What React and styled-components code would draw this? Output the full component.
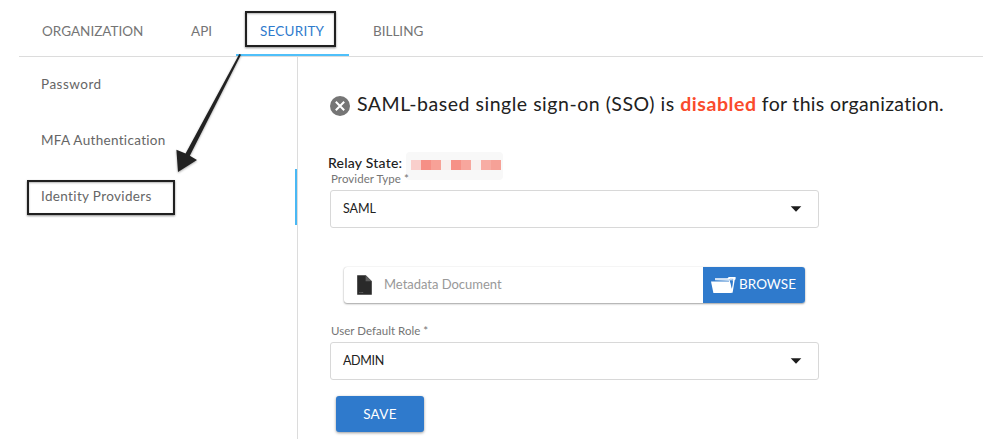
import React from "react";
import styled, { createGlobalStyle } from "styled-components";

const Global = createGlobalStyle`
  *, *::before, *::after { box-sizing: border-box; }
  body { margin: 0; background: #fff; font-family: Lato, "Open Sans", sans-serif; color: #212121; }
`;

const Page = styled.div`
  position: relative;
  width: 983px;
  height: 439px;
  padding-left: 19px;
  overflow: hidden;
  background: #fff;
`;

const TabBar = styled.nav`
  display: flex;
  height: 57px;
  padding-top: 8px;
  border-bottom: 1px solid #dcdcdc;
`;

const Tab = styled.a`
  width: ${(p) => p.$width}px;
  height: 48px;
  padding-left: ${(p) => p.$inset || 24}px;
  line-height: 46px;
  font-size: 13.5px;
  letter-spacing: ${(p) => p.$track || 0}px;
  white-space: nowrap;
  color: ${(p) => (p.$active ? "#2f7bcd" : "#757575")};
  border-bottom: 2px solid ${(p) => (p.$active ? "#4fc0fa" : "transparent")};
`;

const Body = styled.div`
  display: flex;
  height: 382px;
`;

const Sidebar = styled.aside`
  width: 279px;
  border-right: 1px solid #dcdcdc;
`;

const SideItem = styled.a`
  display: block;
  height: 56px;
  padding-left: 22px;
  line-height: 54px;
  font-size: 13.5px;
  letter-spacing: ${(p) => p.$track || 0}px;
  white-space: nowrap;
  color: #666;
  border-right: 2px solid ${(p) => (p.$active ? "#49b8f4" : "transparent")};
`;

const Content = styled.main`
  display: flex;
  flex-direction: column;
  align-items: flex-start;
  padding: 35px 0 0 30px;
`;

const Status = styled.h1`
  display: flex;
  align-items: center;
  gap: 7px;
  height: 28px;
  margin: 0 0 0 2px;
  font-size: 19.5px;
  font-weight: 400;
  letter-spacing: 0.52px;
  white-space: pre;
`;

const StatusText = styled.span`
  line-height: 24px;
  padding-bottom: 4px;
`;

const Disabled = styled.strong`
  font-weight: 700;
  letter-spacing: 0.55px;
  color: #fa4b2c;
`;

const StatusEnd = styled.span`
  letter-spacing: 0.32px;
`;

const RelayRow = styled.div`
  display: flex;
  height: 28px;
  margin-top: 32px;
`;

const RelayLabel = styled.span`
  width: 78px;
  line-height: 22px;
  font-size: 14px;
  font-weight: 500;
  letter-spacing: 0.22px;
  white-space: nowrap;
`;

const Redacted = styled.span`
  display: flex;
  width: 97px;
  height: 28px;
  padding: 8px 0 0 5px;
  border-radius: 4px;
  background: #f8f8f8;
`;

const Pixel = styled.i`
  width: 10px;
  height: 10px;
  background: ${(p) => p.$color};
`;

const FieldLabel = styled.label`
  position: relative;
  height: 14px;
  margin: ${(p) => p.$top}px 0 4px 3px;
  line-height: 14px;
  font-size: 11.5px;
  letter-spacing: ${(p) => p.$track}px;
  color: #757575;
`;

const Select = styled.div`
  display: flex;
  align-items: center;
  justify-content: space-between;
  width: 489px;
  height: 38px;
  margin-left: 2px;
  padding: 0 16px 1px 12px;
  border: 1px solid #d8d8d8;
  border-radius: 3px;
  font-size: 12.5px;
  letter-spacing: ${(p) => p.$track}px;
`;

const Upload = styled.div`
  display: flex;
  width: 461px;
  height: 36px;
  margin: 39px 0 0 16px;
  border-radius: 3px;
  box-shadow: 0 1px 2px rgba(0, 0, 0, 0.36), 0 0 1px rgba(0, 0, 0, 0.2);
`;

const FileName = styled.div`
  display: flex;
  align-items: center;
  gap: 12px;
  width: 359px;
  padding-left: 13px;
  font-size: 13px;
  letter-spacing: -0.02px;
  color: #999;
`;

const Browse = styled.button`
  display: flex;
  align-items: center;
  gap: 3px;
  width: 102px;
  padding: 0 0 0 8px;
  border: 0;
  border-radius: 0 3px 3px 0;
  background: #2f7acc;
  color: #fff;
  font: 400 13.5px Lato, sans-serif;
  letter-spacing: 0.03px;
`;

const Save = styled.button`
  width: 88px;
  height: 36px;
  margin: 16px 0 0 8px;
  padding: 0 0 1px;
  border: 0;
  border-radius: 3px;
  background: #2f7acc;
  box-shadow: 0 1px 3px rgba(0, 0, 0, 0.4);
  color: #fff;
  font: 400 13.5px Lato, sans-serif;
  letter-spacing: 0.3px;
`;

const ButtonText = styled.span`
  padding-bottom: 2px;
`;

const Outline = styled.div`
  position: absolute;
  left: ${(p) => p.$x}px;
  top: ${(p) => p.$y}px;
  width: ${(p) => p.$w}px;
  height: ${(p) => p.$h}px;
  border: 2px solid #202020;
  box-shadow: 0 1px 2px rgba(0, 0, 0, 0.45), inset 0 1px 2px rgba(0, 0, 0, 0.3);
`;

const ArrowLayer = styled.svg`
  position: absolute;
  left: 160px;
  top: 44px;
  filter: drop-shadow(0 1px 1px rgba(0, 0, 0, 0.35));
`;

const CrossIcon = () => (
  <svg width="20" height="20" viewBox="0 0 20 20">
    <circle cx="10" cy="10" r="10" fill="#757575" />
    <path d="M5.8 5.8l8.4 8.4M14.2 5.8l-8.4 8.4" stroke="#fff" strokeWidth="2" />
  </svg>
);

const Caret = () => (
  <svg width="12" height="6" viewBox="0 0 12 6">
    <path d="M0.7 0.3h10.6L6 5.8z" fill="#1c1c1c" />
  </svg>
);

const DocumentIcon = () => (
  <svg width="15" height="20" viewBox="0 0 15 20">
    <path d="M0.2 0.2h8.6l6 6v13.6H0.2z" fill="#2a2a2a" />
    <path d="M8.6 0.2l6.2 6.1H8.6z" fill="#606060" />
    <path d="M2.2 17.5h1.5M4.2 17.5h2" stroke="#888" strokeWidth="0.5" />
  </svg>
);

const FolderIcon = () => (
  <svg width="25" height="18" viewBox="0 0 25 18">
    <path d="M4 4.3V2.2h12.5L17.8 0.9h6.8v2.4l-.9.6L21.6 16.8h-1.4L18 5z" fill="#fff" />
    <path d="M4 4.1h14l1.4-.9h2.4v1" fill="none" stroke="#2f7acc" strokeWidth="0.5" />
    <path d="M18.8 4.6h3.1L20.9 13z" fill="#2f7acc" />
    <path d="M0 5.4h18.6l1.6 1.9.8 8.2-.6 1.6H2.4z" fill="#fff" />
    <path d="M18.8 4.6h3L20.9 12.8z" fill="#2f7acc" />
  </svg>
);

const pixels = ["#f9cfcc", "#f68f86", "#f7a197", "#f8efee", "#f69187", "#f7a69d", "#f8f1f0", "#f7ada4", "#f6a197"];

export default function App() {
  return (
    <Page>
      <Global />
      <TabBar>
        <Tab $width={148} $inset={23}>ORGANIZATION</Tab>
        <Tab $width={69}>API</Tab>
        <Tab $width={113} $track={0.22} $active>SECURITY</Tab>
        <Tab $width={98}>BILLING</Tab>
      </TabBar>
      <Body>
        <Sidebar>
          <SideItem $track={0.5}>Password</SideItem>
          <SideItem $track={0.32}>MFA Authentication</SideItem>
          <SideItem $track={0.35} $active>Identity Providers</SideItem>
        </Sidebar>
        <Content>
          <Status>
            <CrossIcon />
            <StatusText>
              {"SAML-based single sign-on (SSO) is "}
              <Disabled>disabled</Disabled>
              <StatusEnd>{" for this organization."}</StatusEnd>
            </StatusText>
          </Status>
          <RelayRow>
            <RelayLabel>Relay State:</RelayLabel>
            <Redacted>
              {pixels.map((color) => <Pixel key={color} $color={color} />)}
            </Redacted>
          </RelayRow>
          <FieldLabel $top={-8} $track={0.07}>Provider Type *</FieldLabel>
          <Select $track={-0.1}>SAML<Caret /></Select>
          <Upload>
            <FileName><DocumentIcon /><ButtonText>Metadata Document</ButtonText></FileName>
            <Browse><FolderIcon /><ButtonText>BROWSE</ButtonText></Browse>
          </Upload>
          <FieldLabel $top={21} $track={0.03}>User Default Role *</FieldLabel>
          <Select $track={-0.35}>ADMIN<Caret /></Select>
          <Save>SAVE</Save>
        </Content>
      </Body>
      <Outline $x={245} $y={11} $w={91} $h={36} />
      <Outline $x={27} $y={180} $w={148} $h={35} />
      <ArrowLayer width="90" height="135" viewBox="160 44 90 135">
        <path d="M239.3 54l1.7.8L189.8 155.8l7.2 4.2L178 172l-1.6-22.2 9.2 3.8z" fill="#222" />
      </ArrowLayer>
    </Page>
  );
}
